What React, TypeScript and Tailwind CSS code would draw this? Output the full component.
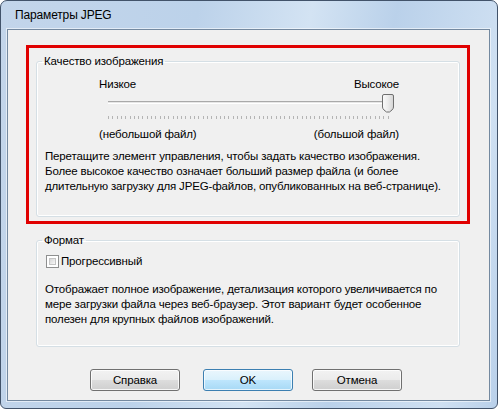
const Thumb = () => (
  <svg width="12" height="19" viewBox="0 0 12 19" className="absolute left-[283px] top-[1px]">
    <defs>
      <linearGradient id="thumbFill" x1="0" y1="0" x2="1" y2="0">
        <stop offset="0" stopColor="#fbfbfb" />
        <stop offset="0.5" stopColor="#ececec" />
        <stop offset="1" stopColor="#d4d4d4" />
      </linearGradient>
    </defs>
    <path
      d="M2 0.5 H10 Q11.5 0.5 11.5 2 V13 Q11.5 14.5 10 16 L7.5 18 H4.5 L2 16 Q0.5 14.5 0.5 13 V2 Q0.5 0.5 2 0.5 Z"
      fill="url(#thumbFill)"
      stroke="#6f6f6f"
    />
  </svg>
);

const Ticks = () => {
  const xs = Array.from({ length: 66 }, (_, i) => Math.round(i * 4.3) + 0.5);
  return (
    <svg width="284" height="3" className="block">
      {xs.map((x) => (
        <line key={x} x1={x} y1="0" x2={x} y2="3" stroke="#b4b4b4" />
      ))}
    </svg>
  );
};

const Button = ({ label, primary, className }: { label: string; primary?: boolean; className?: string }) => (
  <div
    className={
      "w-[90px] h-[22px] rounded-[3px] border flex items-center justify-center " +
      (primary
        ? "border-[#3c7fb1] bg-[linear-gradient(to_bottom,#eaf6fd_0%,#d9f0fc_50%,#bee6fd_50%,#a7d9f5_100%)] shadow-[inset_0_0_0_1px_rgba(255,255,255,0.7)] "
        : "border-[#707070] bg-[linear-gradient(to_bottom,#f2f2f2_0%,#ebebeb_50%,#dddddd_50%,#cfcfcf_100%)] shadow-[inset_0_0_0_1px_rgba(255,255,255,0.8)] ") +
      (className ?? "")
    }
  >
    {label}
  </div>
);

export default function App() {
  return (
    <div className="w-[498px] h-[409px] bg-white font-['Liberation_Sans',Arial,sans-serif] text-[11.5px] tracking-[-0.15px] leading-[15px] text-black whitespace-nowrap">
      <div className="w-[498px] h-[409px] rounded-t-[7px] rounded-b-[6px] border border-[#42536a] bg-[linear-gradient(100deg,#c3d5ea_0%,#bcd2ea_35%,#d3e3f3_55%,#bad1ea_70%,#cfe0f2_90%,#b9d0ea_100%)] flex flex-col">
        <div className="h-[28px] flex items-center pl-[14px] shrink-0 text-[12px]">Параметры JPEG</div>

        <div className="flex-1 ml-[6px] mr-[7px] mb-[7px] border border-[#7489a0] bg-[#f0f0f0] shadow-[0_0_0_1px_rgba(255,255,255,0.55)] flex flex-col">
          {/* highlighted quality block */}
          <div className="ml-[18px] mt-[15px] w-[444px] h-[179px] border-[3px] border-[#e00000]">
            <fieldset className="ml-[7px] mt-[6px] w-[424px] h-[163px] border border-[#d5dfe5] rounded-[3px] shadow-[inset_0_0_0_1px_#fff] px-0">
              <legend className="ml-[5px] px-[2px]">Качество изображения</legend>

              <div className="ml-[62px] mt-[8px] w-[300px]">
                <div className="flex justify-between">
                  <span>Низкое</span>
                  <span>Высокое</span>
                </div>
                <div className="relative h-[20px] mt-[1px]">
                  <div className="absolute left-[9px] right-[9px] top-[8px] h-[3px] border-t border-[#a9a9a9] bg-[#e6e6e6] border-b border-b-white" />
                  <Thumb />
                </div>
                <div className="ml-[9px] mt-[3px] h-[3px]">
                  <Ticks />
                </div>
                <div className="flex justify-between mt-[8px]">
                  <span>(небольшой файл)</span>
                  <span>(большой файл)</span>
                </div>
              </div>

              <p className="ml-[8px] mt-[7px]">
                Перетащите элемент управления, чтобы задать качество изображения.
                <br />
                Более высокое качество означает больший размер файла (и более
                <br />
                длительную загрузку для JPEG-файлов, опубликованных на веб-странице).
              </p>
            </fieldset>
          </div>

          {/* format block */}
          <fieldset className="ml-[28px] mt-[9px] w-[424px] h-[114px] border border-[#d5dfe5] rounded-[3px] shadow-[inset_0_0_0_1px_#fff]">
            <legend className="ml-[5px] px-[2px]">Формат</legend>
            <div className="flex items-center ml-[9px] mt-[6px] h-[15px]">
              <div className="w-[13px] h-[13px] border border-[#8e8f8f] bg-white p-[2px]">
                <div className="w-full h-full border border-[#c4c4c4] bg-[linear-gradient(135deg,#d6d6d6,#f8f8f8)]" />
              </div>
              <span className="ml-[2px]">Прогрессивный</span>
            </div>
            <p className="ml-[8px] mt-[13px]">
              Отображает полное изображение, детализация которого увеличивается по
              <br />
              мере загрузки файла через веб-браузер. Этот вариант будет особенное
              <br />
              полезен для крупных файлов изображений.
            </p>
          </fieldset>

          <div className="flex mt-[22px]">
            <Button label="Справка" className="ml-[82px]" />
            <Button label="OK" primary className="ml-[23px]" />
            <Button label="Отмена" className="ml-[19px]" />
          </div>
        </div>
      </div>
    </div>
  );
}
